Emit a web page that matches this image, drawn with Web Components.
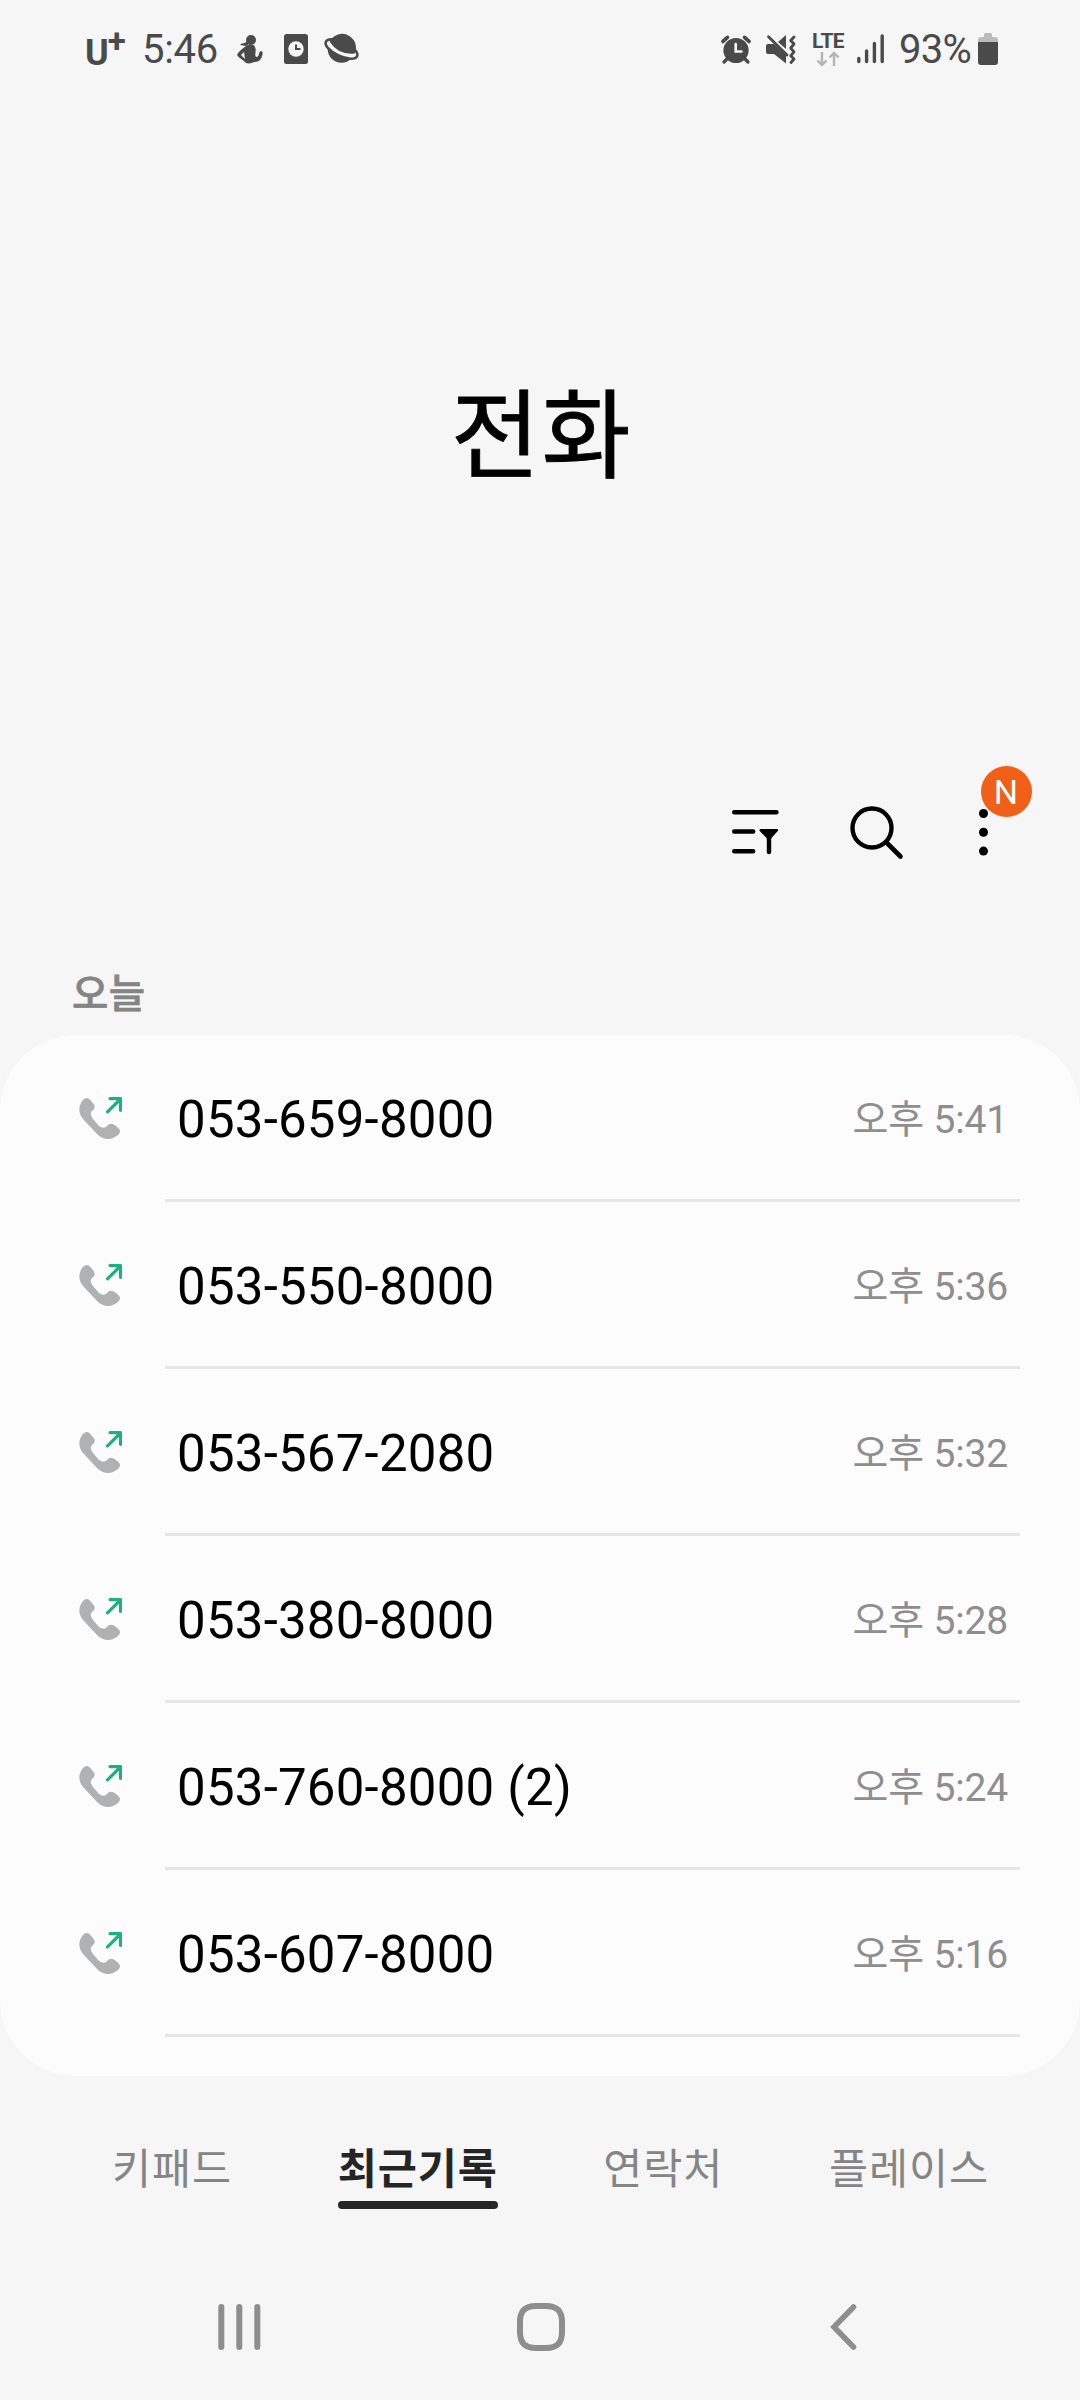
<!DOCTYPE html>
<html lang="ko">
<head>
<meta charset="UTF-8">
<title>전화</title>
<style>
  body {
    margin: 0;
    background: #f6f6f6;
    font-family: Roboto, "Noto Sans CJK KR", sans-serif;
  }
</style>
</head>
<body>
<phone-app></phone-app>

<script>
class StatusBar extends HTMLElement {
  constructor() {
    super();
    this.attachShadow({ mode: 'open' });
  }

  connectedCallback() {
    this.shadowRoot.innerHTML = `
      <style>
        :host {
          display: flex;
          justify-content: space-between;
          height: 98px;
          padding: 0 82px 0 85px;
          box-sizing: border-box;
          color: #4a4a4a;
          font-size: 40px;
          line-height: 99px;
        }
        div { display: flex; align-items: center; }
        svg { display: block; fill: #4a4a4a; overflow: visible; }
        .carrier {
          display: flex;
          width: 57px;
          height: 98px;
          font-size: 36px;
        }
        .carrier b { line-height: 106px; font-weight: 700; }
        .carrier sup { font-size: 33px; line-height: 81px; vertical-align: top; font-weight: 700; margin-left: -1px; }
        .time { width: 94px; letter-spacing: -.3px; }
        .net { flex-direction: column; width: 34px; margin: 0 12px 0 15px; }
        .net span { font-size: 21px; font-weight: 700; line-height: 19px; height: 20px; letter-spacing: -.7px; }
        .percent { letter-spacing: -.7px; margin-left: 15px; width: 78px; white-space: nowrap; }
      </style>
      <div>
        <span class="carrier"><b>U</b><sup>+</sup></span>
        <span class="time">5:46</span>
        <svg width="26" height="30" viewBox="0 0 26 30" style="margin-left:1px">
          <circle cx="14" cy="6" r="5"/>
          <path d="M11 6c-2 4-5 2-8 5l6 1 4-3z"/>
          <path d="M9 12c3-2 8-2 9 1 2 4-1 7 1 10 4 0 2-5 5-6 2 0 2 3 1 5-1 5-5 6-8 6-3 2-9 2-10-1-3-2-6-4-7-6 1-3 5-6 9-9z"/>
          <path d="M7 18l-3 3 4 4z" fill="#f6f6f6"/>
        </svg>
        <svg width="24" height="30" viewBox="0 0 24 30" style="margin-left:21px">
          <rect width="24" height="30" rx="2.5"/>
          <circle cx="12" cy="15" r="7.7" fill="#f6f6f6"/>
          <path d="M12 10.5V15h4.500" fill="none" stroke="#4a4a4a" stroke-width="2"/>
        </svg>
        <svg width="35" height="28" viewBox="-17.5 -14 35 28" style="margin-left:16px">
          <circle r="13.8"/>
          <g transform="rotate(25)">
            <ellipse rx="17.200" ry="7.200" fill="#f6f6f6" stroke="#4a4a4a" stroke-width="2.600"/>
            <path d="M-13.800-1.500A13.800 13.800 0 0 1 13.800-1.500Q0 7-13.800-1.500z"/>
          </g>
        </svg>
      </div>
      <div>
        <svg width="30" height="29" viewBox="0 0 30 29">
          <circle cx="15" cy="15.5" r="12.6"/>
          <path d="M2 6.400l4.400-4M23.600 2.400l4.400 4" stroke="#4a4a4a" stroke-width="3.800" stroke-linecap="round"/>
          <path d="M6 24l-3 3M24 24l3 3" stroke="#4a4a4a" stroke-width="3.200" stroke-linecap="round"/>
          <path d="M14.700 9v7.500h5.800" fill="none" stroke="#f6f6f6" stroke-width="2.600" stroke-linecap="round"/>
        </svg>
        <svg width="30" height="29" viewBox="0 0 30 29" style="margin-left:15px">
          <path d="M8 9H2Q0 9 0 11v6q0 2 2 2h6l12 9.500V20zM12 7l8-7v14z"/>
          <path d="M2.500 1.800L21 20" fill="none" stroke="#4a4a4a" stroke-width="2.800" stroke-linecap="round"/>
          <path d="M28 2l-3.300 3.500L28 9l-3.300 4L28 16.800l-3.300 4L28 24l-3 3.500" fill="none" stroke="#4a4a4a" stroke-width="2.800" stroke-linecap="round" stroke-linejoin="round"/>
        </svg>
        <div class="net">
          <span>LTE</span>
          <svg width="24" height="15" viewBox="0 0 24 15">
            <path d="M6 0v13M1.500 8.500L6 13l4.500-4.500M18 14V1M13.500 5.500L18 1l4.500 4.500" fill="none" stroke="#b4b4b4" stroke-width="2.400"/>
          </svg>
        </div>
        <svg width="27" height="30" viewBox="0 0 27 30">
          <path d="M1.800 24.500v3M9.600 17v10.500M17.400 9.500v18M25.200 2v25.500" stroke="#4a4a4a" stroke-width="3.400" stroke-linecap="round"/>
        </svg>
        <span class="percent">93%</span>
        <svg width="20" height="32" viewBox="0 0 20 32" style="margin-left:1px">
          <path d="M6 4V1.500Q6 0 7.500 0h5Q14 0 14 1.500V4h3q3 0 3 3v3H0V7q0-3 3-3z" fill="#bcbcbc"/>
          <path d="M0 9h20v20q0 3-3 3H3q-3 0-3-3z"/>
        </svg>
      </div>
    `;
  }
}

class AppToolbar extends HTMLElement {
  constructor() {
    super();
    this.attachShadow({ mode: 'open' });
  }

  connectedCallback() {
    this.shadowRoot.innerHTML = `
      <style>
        :host {
          display: flex;
          justify-content: flex-end;
          align-items: center;
          height: 146px;
          padding-right: 92.5px;
        }
        svg { display: block; overflow: visible; }
        .search { margin: 0 75.5px 0 71px; }
        .more { position: relative; }
        .badge {
          position: absolute;
          left: 2px;
          top: -43px;
          width: 51px;
          height: 51px;
          border-radius: 50%;
          background: #f06018;
          color: #fff;
          font-size: 34px;
          line-height: 52px;
          text-align: center;
        }
      </style>
      <svg width="47" height="44" viewBox="0 0 47 44">
        <path d="M2.200 2.200h42.300M2.200 21.500h19M2.200 41.200h19M37 24v18" stroke="#000" stroke-width="4.400" stroke-linecap="round"/>
        <path d="M29 19h16q1.500 0 1 1.800L39 28.500h-4l-7.500-7.700Q27 19 29 19z"/>
      </svg>
      <svg class="search" width="53" height="53" viewBox="0 0 53 53">
        <circle cx="22" cy="22" r="19.500" fill="none" stroke="#000" stroke-width="4.400"/>
        <path d="M36.500 36.500L50.500 50.500" stroke="#000" stroke-width="4.600" stroke-linecap="round"/>
      </svg>
      <div class="more">
        <svg width="9" height="47" viewBox="0 0 9 47">
          <circle cx="4.500" cy="4.500" r="4.500"/><circle cx="4.500" cy="23.300" r="4.500"/><circle cx="4.500" cy="42.100" r="4.500"/>
        </svg>
        <span class="badge">N</span>
      </div>
    `;
  }
}

class CallRow extends HTMLElement {
  constructor() {
    super();
    this.attachShadow({ mode: 'open' });
  }

  connectedCallback() {
    this.shadowRoot.innerHTML = `
      <style>
        :host {
          display: flex;
          height: 167px;
          padding: 0 60px 0 79px;
        }
        svg { display: block; flex: none; margin: 62px 43px 0 0; }
        .body {
          flex: 1;
          display: flex;
          justify-content: space-between;
          padding: 0 12px;
          border-bottom: 3px solid #e6e6e6;
          line-height: 170px;
          height: 164px;
        }
        .number { font-size: 51px; letter-spacing: .22px; color: #000; }
        .time { font-size: 39px; letter-spacing: -.15px; color: #8e8e8e; }
      </style>
      <svg width="43" height="43" viewBox="0 0 43 43">
        <path d="M8 1Q5 1 2.500 5C-1 11 0 17 4 22L18 37C23 42 29 43 34 41C38 39 41 37 41 34Q41 32 37 29Q32 25 29 28L27 30Q24 32 20 29L14 22Q10 17 13 14L15 12Q17 9 13 5Q10 1 8 1Z" fill="#b0b1b3"/>
        <path d="M28.500 14.800L41.500 2M31 1.600H41.500V13.300" fill="none" stroke="#1fb082" stroke-width="3.200" stroke-linecap="round" stroke-linejoin="round"/>
      </svg>
      <div class="body">
        <span class="number"><slot></slot></span>
        <span class="time">${this.getAttribute('time')}</span>
      </div>
    `;
  }
}

class CallList extends HTMLElement {
  constructor() {
    super();
    this.attachShadow({ mode: 'open' });
  }

  connectedCallback() {
    this.shadowRoot.innerHTML = `
      <style>
        :host { display: block; }
        h2 {
          margin: 0;
          padding-left: 72px;
          height: 79px;
          font-size: 39.500px;
          font-weight: 500;
          line-height: 77px;
          letter-spacing: .5px;
          color: #858585;
          -webkit-text-stroke: .7px #858585;
        }
        .card {
          height: 1041px;
          border-radius: 76px;
          background: #fcfcfc;
          overflow: hidden;
        }
      </style>
      <h2>${this.getAttribute('heading')}</h2>
      <div class="card"><slot></slot></div>
    `;
  }
}

class TabItem extends HTMLElement {
  constructor() {
    super();
    this.attachShadow({ mode: 'open' });
  }

  connectedCallback() {
    this.shadowRoot.innerHTML = `
      <style>
        :host {
          display: block;
          font-size: 42.500px;
          line-height: 62px;
          letter-spacing: .9px;
          color: #858585;
          white-space: nowrap;
        }
        :host([active]) { color: #252525; font-weight: 700; }
        .line { height: 8px; border-radius: 4px; }
        :host([active]) .line { background: #252525; }
      </style>
      <slot></slot>
      <div class="line"></div>
    `;
  }
}

class NavBar extends HTMLElement {
  constructor() {
    super();
    this.attachShadow({ mode: 'open' });
  }

  connectedCallback() {
    this.shadowRoot.innerHTML = `
      <style>
        :host {
          display: flex;
          justify-content: space-between;
          align-items: center;
          height: 146px;
          padding: 0 223px 0 218px;
        }
        svg { display: block; fill: none; stroke: #8e8e8e; stroke-width: 6; stroke-linecap: round; }
        .home { margin-left: -9px; }
      </style>
      <svg width="43" height="46" viewBox="0 0 43 46"><path d="M3.300 3v40M21.300 3v40M39.300 3v40"/></svg>
      <svg class="home" width="48" height="48" viewBox="0 0 48 48"><path d="M19 3h10C40 3 45 8 45 19v10C45 40 40 45 29 45H19C8 45 3 40 3 29V19C3 8 8 3 19 3z"/></svg>
      <svg width="27" height="46" viewBox="0 0 27 46"><path d="M23.500 3L4 23l19.500 20" stroke-width="5.600"/></svg>
    `;
  }
}

class PhoneApp extends HTMLElement {
  constructor() {
    super();
    this.attachShadow({ mode: 'open' });
  }

  connectedCallback() {
    this.shadowRoot.innerHTML = `
      <style>
        :host {
          display: flex;
          flex-direction: column;
          width: 1080px;
          height: 2400px;
          overflow: hidden;
          background: #f6f6f6;
        }
        h1 {
          margin: 0;
          height: 661px;
          font-size: 97px;
          font-weight: 400;
          line-height: 678px;
          letter-spacing: 1.500px;
          text-indent: 3px;
          text-align: center;
          color: #000;
          -webkit-text-stroke: .8px #000;
        }
        call-list { margin-top: 51px; }
        .tabs {
          display: flex;
          justify-content: space-between;
          height: 178px;
          padding: 63px 91px 0 112px;
          box-sizing: border-box;
        }
      </style>
      <status-bar></status-bar>
      <h1>전화</h1>
      <app-toolbar></app-toolbar>
      <call-list heading="오늘">
        <call-row time="오후 5:41">053-659-8000</call-row>
        <call-row time="오후 5:36">053-550-8000</call-row>
        <call-row time="오후 5:32">053-567-2080</call-row>
        <call-row time="오후 5:28">053-380-8000</call-row>
        <call-row time="오후 5:24">053-760-8000 (2)</call-row>
        <call-row time="오후 5:16">053-607-8000</call-row>
      </call-list>
      <div class="tabs">
        <tab-item>키패드</tab-item>
        <tab-item active>최근기록</tab-item>
        <tab-item>연락처</tab-item>
        <tab-item>플레이스</tab-item>
      </div>
      <nav-bar></nav-bar>
    `;
  }
}

customElements.define('status-bar', StatusBar);
customElements.define('app-toolbar', AppToolbar);
customElements.define('call-row', CallRow);
customElements.define('call-list', CallList);
customElements.define('tab-item', TabItem);
customElements.define('nav-bar', NavBar);
customElements.define('phone-app', PhoneApp);
</script>
</body>
</html>
